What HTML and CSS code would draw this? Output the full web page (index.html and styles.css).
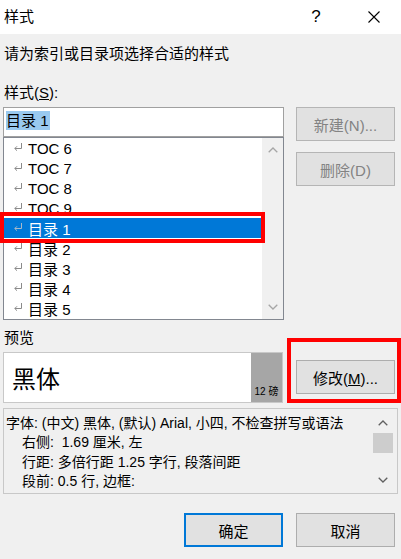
FILE: index.html
```html
<!DOCTYPE html>
<html lang="zh-CN">
<head>
<meta charset="utf-8">
<title>样式</title>
<link rel="stylesheet" href="styles.css">
</head>
<body>
<div class="dialog">
  <div class="titlebar">
    <span class="title">样式</span>
    <span class="help">?</span>
    <span class="close"><svg width="12" height="12" viewBox="0 0 12 12"><path d="M0.5 0.5 L11.5 11.5 M11.5 0.5 L0.5 11.5" stroke="#000" stroke-width="1.1" fill="none"/></svg></span>
  </div>
  <div class="body">
    <div class="prompt">请为索引或目录项选择合适的样式</div>
    <div class="label">样式(<u>S</u>):</div>
    <div class="main">
      <div class="left">
        <div class="input"><span class="sel">目录 1</span></div>
        <div class="list">
          <ul class="items">
            <li><svg class="ret" width="8" height="8" viewBox="0 0 8 8"><path d="M7.5 0 V5.5 H0.8 M3 3.3 L0.8 5.5 L3 7.7" stroke="currentColor" fill="none"/></svg><span>TOC 6</span></li>
            <li><svg class="ret" width="8" height="8" viewBox="0 0 8 8"><path d="M7.5 0 V5.5 H0.8 M3 3.3 L0.8 5.5 L3 7.7" stroke="currentColor" fill="none"/></svg><span>TOC 7</span></li>
            <li><svg class="ret" width="8" height="8" viewBox="0 0 8 8"><path d="M7.5 0 V5.5 H0.8 M3 3.3 L0.8 5.5 L3 7.7" stroke="currentColor" fill="none"/></svg><span>TOC 8</span></li>
            <li><svg class="ret" width="8" height="8" viewBox="0 0 8 8"><path d="M7.5 0 V5.5 H0.8 M3 3.3 L0.8 5.5 L3 7.7" stroke="currentColor" fill="none"/></svg><span>TOC 9</span></li>
            <li class="selected"><svg class="ret" width="8" height="8" viewBox="0 0 8 8"><path d="M7.5 0 V5.5 H0.8 M3 3.3 L0.8 5.5 L3 7.7" stroke="currentColor" fill="none"/></svg><span>目录 1</span></li>
            <li><svg class="ret" width="8" height="8" viewBox="0 0 8 8"><path d="M7.5 0 V5.5 H0.8 M3 3.3 L0.8 5.5 L3 7.7" stroke="currentColor" fill="none"/></svg><span>目录 2</span></li>
            <li><svg class="ret" width="8" height="8" viewBox="0 0 8 8"><path d="M7.5 0 V5.5 H0.8 M3 3.3 L0.8 5.5 L3 7.7" stroke="currentColor" fill="none"/></svg><span>目录 3</span></li>
            <li><svg class="ret" width="8" height="8" viewBox="0 0 8 8"><path d="M7.5 0 V5.5 H0.8 M3 3.3 L0.8 5.5 L3 7.7" stroke="currentColor" fill="none"/></svg><span>目录 4</span></li>
            <li><svg class="ret" width="8" height="8" viewBox="0 0 8 8"><path d="M7.5 0 V5.5 H0.8 M3 3.3 L0.8 5.5 L3 7.7" stroke="currentColor" fill="none"/></svg><span>目录 5</span></li>
          </ul>
          <div class="vscroll">
            <div class="arrow light"><svg width="10" height="6" viewBox="0 0 10 6"><path d="M0.7 5.3 L5 1 L9.3 5.3" stroke="currentColor" stroke-width="1.3" fill="none"/></svg></div>
            <div class="arrow light"><svg width="10" height="6" viewBox="0 0 10 6"><path d="M0.7 0.7 L5 5 L9.3 0.7" stroke="currentColor" stroke-width="1.3" fill="none"/></svg></div>
          </div>
        </div>
      </div>
      <div class="right">
        <button class="btn disabled">新建(N)...</button>
        <button class="btn disabled">删除(D)</button>
      </div>
    </div>
    <div class="preview-label">预览</div>
    <div class="preview-row">
      <div class="preview">
        <div class="preview-text">黑体</div>
        <div class="preview-size">12 磅</div>
      </div>
      <button class="btn modify">修改(<u>M</u>)...</button>
    </div>
    <div class="desc">
      <div class="desc-text"><div>字体: (中文) 黑体, (默认) Arial, 小四, 不检查拼写或语法</div><div class="indent">右侧:  1.69 厘米, 左</div><div class="indent">行距: 多倍行距 1.25 字行, 段落间距</div><div class="indent">段前: 0.5 行, 边框:</div></div>
      <div class="desc-scroll">
        <div class="arrow dark"><svg width="10" height="6" viewBox="0 0 10 6"><path d="M0.7 5.3 L5 1 L9.3 5.3" stroke="currentColor" stroke-width="1.3" fill="none"/></svg></div>
        <div class="thumb"></div>
        <div class="track"></div>
        <div class="arrow dark"><svg width="10" height="6" viewBox="0 0 10 6"><path d="M0.7 0.7 L5 5 L9.3 0.7" stroke="currentColor" stroke-width="1.3" fill="none"/></svg></div>
      </div>
    </div>
    <div class="footer">
      <button class="btn ok">确定</button>
      <button class="btn">取消</button>
    </div>
  </div>
  <div class="mark mark-item"></div>
  <div class="mark mark-modify"></div>
</div>
</body>
</html>
```

FILE: styles.css
```css
html, body {
  margin: 0;
  padding: 0;
}
body {
  font-family: "Liberation Sans", "Noto Sans CJK SC", sans-serif;
  font-size: 15px;
  color: #000;
  background: #f0f0f0;
}
.dialog {
  width: 401px;
  height: 559px;
  position: relative;
  background: #f0f0f0;
  overflow: hidden;
}
.titlebar {
  height: 34px;
  background: #fff;
  display: flex;
  align-items: center;
  padding-right: 17px;
}
.title {
  flex: 1;
  padding-left: 4px;
  line-height: 20px;
}
.help {
  width: 20px;
  text-align: center;
  font-size: 17px;
  line-height: 20px;
  margin-right: 38px;
}
.close {
  width: 20px;
  height: 20px;
  display: flex;
  align-items: center;
  justify-content: center;
}
.body {
  padding-left: 3px;
}
.prompt {
  margin-top: 10px;
  line-height: 20px;
  padding-left: 1px;
}
.label {
  margin-top: 19px;
  line-height: 20px;
  padding-left: 1px;
}
.main {
  margin-top: 4px;
  display: flex;
  gap: 12px;
}
.left {
  width: 281px;
}
.input {
  height: 30px;
  box-sizing: border-box;
  border: 1px solid #a0a0a0;
  background: #fff;
  padding: 3px 0 0 2px;
}
.sel {
  display: inline-block;
  background: #99c9ef;
  line-height: 19px;
  padding: 0 1px 0 0;
}
.list {
  height: 183px;
  box-sizing: border-box;
  border: 1px solid #828790;
  background: #fff;
  display: flex;
}
.items {
  flex: 1;
  list-style: none;
  margin: 0;
  padding: 0;
}
.items li {
  height: 20px;
  display: flex;
  align-items: center;
  padding-left: 10px;
  color: #000;
}
.items li .ret {
  color: #8a8a8a;
  margin-right: 6px;
  margin-top: -2px;
  flex: none;
}
.items li.selected {
  background: #0078d7;
  color: #fff;
}
.items li.selected .ret {
  color: #a9b9c9;
}
.vscroll {
  width: 21px;
  background: #f0f0f0;
  display: flex;
  flex-direction: column;
  justify-content: space-between;
}
.arrow {
  height: 24px;
  display: flex;
  align-items: center;
  justify-content: center;
}
.arrow.light {
  color: #a6a6a6;
}
.arrow.dark {
  height: 20px;
  color: #606060;
}
.right {
  width: 99px;
  display: flex;
  flex-direction: column;
  gap: 11px;
}
.btn {
  height: 34px;
  width: 99px;
  box-sizing: border-box;
  border: 1px solid #adadad;
  background: #e1e1e1;
  font-family: inherit;
  font-size: 15px;
  color: #000;
  padding: 0;
  margin: 0;
}
.btn.disabled {
  color: #838383;
  border-color: #b5b5b5;
}
.preview-label {
  margin-top: 8px;
  line-height: 20px;
  padding-left: 1px;
}
.preview-row {
  margin-top: 4px;
  display: flex;
  gap: 13px;
  align-items: flex-start;
}
.preview {
  width: 280px;
  height: 51px;
  box-sizing: border-box;
  border: 1px solid #c8c8c8;
  background: #fff;
  display: flex;
}
.preview-text {
  flex: 1;
  display: flex;
  align-items: center;
  padding-left: 8px;
  font-size: 24px;
}
.preview-size {
  width: 31px;
  background: #a6a6a6;
  display: flex;
  align-items: flex-end;
  justify-content: center;
  font-size: 10px;
  line-height: 12px;
  padding-bottom: 4px;
  box-sizing: border-box;
}
.modify {
  margin-top: 8px;
}
.desc {
  margin-top: 5px;
  width: 395px;
  height: 86px;
  box-sizing: border-box;
  border: 1px solid #c8c8c8;
  display: flex;
  font-size: 14px;
}
.desc-text {
  flex: 1;
  padding: 5px 0 0 2px;
  line-height: 19.4px;
  white-space: pre;
  overflow: hidden;
}
.indent {
  padding-left: 16px;
}
.desc-scroll {
  width: 20px;
  margin: 4px 4px 3px 0;
  display: flex;
  flex-direction: column;
}
.thumb {
  height: 20px;
  background: #cdcdcd;
}
.track {
  flex: 1;
}
.footer {
  margin-top: 19px;
  display: flex;
  justify-content: flex-end;
  gap: 13px;
  padding-right: 6px;
}
.btn.ok {
  border: 2px solid #0078d7;
}
.mark {
  position: absolute;
  box-sizing: border-box;
  border: 4px solid #ff0000;
}
.mark-item {
  left: 0;
  top: 212px;
  width: 265px;
  height: 31px;
}
.mark-modify {
  left: 287px;
  top: 338px;
  width: 114px;
  height: 65px;
}
```
